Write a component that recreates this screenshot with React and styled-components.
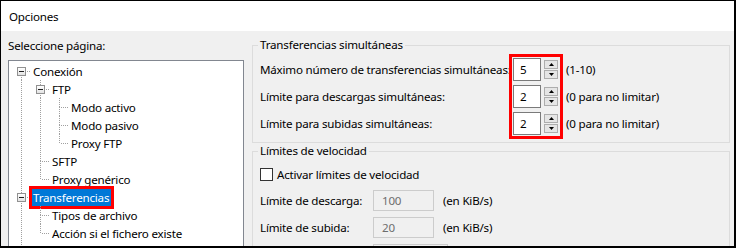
import styled, { createGlobalStyle } from 'styled-components';

const GlobalStyle = createGlobalStyle`
  html, body { margin: 0; padding: 0; background: #fff; }
  body {
    font-family: "Segoe UI", "Noto Sans", "Liberation Sans", sans-serif;
    font-size: 11.6px;
    letter-spacing: -0.2px;
    color: #000;
  }
`;

const Window = styled.div`
  width: 736px;
  height: 248px;
  box-sizing: border-box;
  border: solid #000;
  border-width: 1px 2px 2px 1px;
  display: flex;
  flex-direction: column;
  overflow: hidden;
  background: #f0f0f0;
`;

const TitleBar = styled.div`
  flex: none;
  height: 30px;
  background: #fff;
  display: flex;
  align-items: center;
  padding-left: 8px;
`;

const Body = styled.div`
  flex: 1;
  min-height: 0;
  display: flex;
`;

const Sidebar = styled.div`
  flex: none;
  width: 236px;
  padding-left: 7px;
  display: flex;
  flex-direction: column;
`;

const SideLabel = styled.div`
  margin-top: 7px;
  line-height: 16px;
`;

const TreeBox = styled.div`
  margin-top: 6px;
  flex: 1;
  background: #fff;
  border: 1px solid #828790;
  border-bottom: 0;
  padding: 1px 0 0 3px;
  overflow: hidden;
`;

const TreeRow = styled.div`
  display: flex;
  height: 18px;
  align-items: center;
`;

const dot = '#a0a0a0';
const vLine = `repeating-linear-gradient(to bottom, ${dot} 0 1px, transparent 1px 2px)`;
const hLine = `repeating-linear-gradient(to right, ${dot} 0 1px, transparent 1px 2px)`;

const Guide = styled.span`
  flex: none;
  width: 19px;
  height: 18px;
  background: ${(p) => (p.$on ? `${vLine} 9px 0 / 1px 100% no-repeat` : 'none')};
`;

const Connector = styled.span`
  flex: none;
  width: 19px;
  height: 18px;
  display: flex;
  align-items: center;
  background:
    ${(p) => (p.$up ? `${vLine} 9px 0 / 1px 9px no-repeat,` : '')}
    ${(p) => (p.$down ? `${vLine} 9px 9px / 1px 9px no-repeat,` : '')}
    ${hLine} 11px 9px / 8px 1px no-repeat;
`;

const Expander = styled.span`
  box-sizing: border-box;
  width: 9px;
  height: 9px;
  margin-left: 5px;
  border: 1px solid #919191;
  background:
    linear-gradient(#1f1f1f, #1f1f1f) center / 5px 1px no-repeat,
    linear-gradient(#ffffff, #e3e3e3);
`;

const NodeLabel = styled.span`
  margin-left: 1px;
  padding: 0 2px 0 1px;
  line-height: 17px;
  white-space: nowrap;
  ${(p) =>
    p.$selected &&
    `
    background: #0078d7;
    color: #fff;
    outline: 3px solid #ff0000;
    outline-offset: 0;
  `}
`;

const Main = styled.div`
  flex: 1;
  padding: 6px 4px 0 8px;
  display: flex;
  flex-direction: column;
`;

const Group = styled.fieldset`
  margin: 0;
  border: 1px solid #dcdcdc;
  padding: 1px 7px 7px 7px;
  min-width: 0;
`;

const Legend = styled.legend`
  margin-left: -2px;
  padding: 0 2px;
  line-height: 16px;
`;

const SpinGrid = styled.div`
  display: grid;
  grid-template-columns: 249px 54px auto;
  grid-auto-rows: 23px;
  row-gap: 4px;
  padding-top: 4px;
  align-items: center;
`;

const FieldLabel = styled.span`
  grid-column: 1;
  grid-row: ${(p) => p.$row || 'auto'};
  white-space: nowrap;
`;

const Hint = styled.span`
  grid-column: 3;
  grid-row: ${(p) => p.$row || 'auto'};
  padding-left: 3px;
  white-space: nowrap;
`;

const Spinner = styled.div`
  grid-column: 2;
  grid-row: ${(p) => p.$row};
  display: flex;
  gap: 3px;
  height: 23px;
  padding-left: 4px;
`;

const Highlight = styled.div`
  grid-column: 2;
  grid-row: 1 / span 3;
  align-self: stretch;
  margin: -4px 0;
  border: 3px solid #ff0000;
  pointer-events: none;
`;

const NumberBox = styled.div`
  box-sizing: border-box;
  width: 28px;
  height: 23px;
  background: #fff;
  border: 1px solid #7a7a7a;
  padding-left: 6px;
  line-height: 21px;
`;

const SpinButtons = styled.div`
  display: flex;
  flex-direction: column;
  gap: 1px;
  padding: 2px 0;
`;

const SpinButton = styled.div`
  box-sizing: border-box;
  width: 14px;
  flex: 1;
  background: #e5e5e5;
  border: 1px solid #adadad;
  display: flex;
  align-items: center;
  justify-content: center;
`;

const LimitGrid = styled.div`
  display: grid;
  grid-template-columns: 113px 67px auto;
  grid-auto-rows: 21px;
  row-gap: 6px;
  padding-top: 3px;
  align-items: center;
`;

const CheckRow = styled.label`
  grid-column: 1 / -1;
  display: flex;
  align-items: center;
  gap: 4px;
  height: 16px;
  margin-bottom: -2px;
`;

const CheckBox = styled.span`
  box-sizing: border-box;
  width: 13px;
  height: 13px;
  background: #fff;
  border: 1px solid #333;
`;

const DisabledInput = styled.div`
  box-sizing: border-box;
  width: ${(p) => p.$width || 61}px;
  height: 21px;
  border: 1px solid #cccccc;
  background: #f0f0f0;
  color: #6d6d6d;
  padding-left: 8px;
  line-height: 19px;
`;

const Arrow = ({ up }) => (
  <svg width="5" height="3" viewBox="0 0 5 3">
    <polygon points={up ? '2.5,0 5,3 0,3' : '0,0 5,0 2.5,3'} fill="#000" />
  </svg>
);

const tree = [
  { label: 'Conexión', guides: [], up: false, down: true, box: true },
  { label: 'FTP', guides: [true], up: true, down: true, box: true },
  { label: 'Modo activo', guides: [true, true], up: true, down: true },
  { label: 'Modo pasivo', guides: [true, true], up: true, down: true },
  { label: 'Proxy FTP', guides: [true, true], up: true, down: false },
  { label: 'SFTP', guides: [true], up: true, down: true },
  { label: 'Proxy genérico', guides: [true], up: true, down: false },
  { label: 'Transferencias', guides: [], up: true, down: true, box: true, selected: true },
  { label: 'Tipos de archivo', guides: [true], up: true, down: true },
  { label: 'Acción si el fichero existe', guides: [true], up: true, down: false },
  { label: '', guides: [true], up: false, down: false, blank: true },
];

const spinners = [
  { label: 'Máximo número de transferencias simultáneas:', value: 5, hint: '(1-10)' },
  { label: 'Límite para descargas simultáneas:', value: 2, hint: '(0 para no limitar)' },
  { label: 'Límite para subidas simultáneas:', value: 2, hint: '(0 para no limitar)' },
];

export default function App() {
  return (
    <>
      <GlobalStyle />
      <Window>
        <TitleBar>Opciones</TitleBar>
        <Body>
          <Sidebar>
            <SideLabel>Seleccione página:</SideLabel>
            <TreeBox>
              {tree.map((node, i) => (
                <TreeRow key={i}>
                  {node.guides.map((on, j) => (
                    <Guide key={j} $on={on} />
                  ))}
                  {node.blank ? (
                    <Guide $on={false} />
                  ) : (
                    <Connector $up={node.up} $down={node.down}>
                      {node.box && <Expander />}
                    </Connector>
                  )}
                  {node.label && <NodeLabel $selected={node.selected}>{node.label}</NodeLabel>}
                </TreeRow>
              ))}
            </TreeBox>
          </Sidebar>
          <Main>
            <Group>
              <Legend>Transferencias simultáneas</Legend>
              <SpinGrid>
                {spinners.flatMap((s, i) => [
                  <FieldLabel key={`l${i}`} $row={i + 1}>
                    {s.label}
                  </FieldLabel>,
                  <Spinner key={`s${i}`} $row={i + 1}>
                    <NumberBox>{s.value}</NumberBox>
                    <SpinButtons>
                      <SpinButton>
                        <Arrow up />
                      </SpinButton>
                      <SpinButton>
                        <Arrow />
                      </SpinButton>
                    </SpinButtons>
                  </Spinner>,
                  <Hint key={`h${i}`} $row={i + 1}>
                    {s.hint}
                  </Hint>,
                ])}
                <Highlight />
              </SpinGrid>
            </Group>
            <Group>
              <Legend>Límites de velocidad</Legend>
              <LimitGrid>
                <CheckRow>
                  <CheckBox />
                  Activar límites de velocidad
                </CheckRow>
                <FieldLabel>Límite de descarga:</FieldLabel>
                <DisabledInput>100</DisabledInput>
                <Hint>(en KiB/s)</Hint>
                <FieldLabel>Límite de subida:</FieldLabel>
                <DisabledInput>20</DisabledInput>
                <Hint>(en KiB/s)</Hint>
                <FieldLabel />
                <DisabledInput $width={75} />
              </LimitGrid>
            </Group>
          </Main>
        </Body>
      </Window>
    </>
  );
}
